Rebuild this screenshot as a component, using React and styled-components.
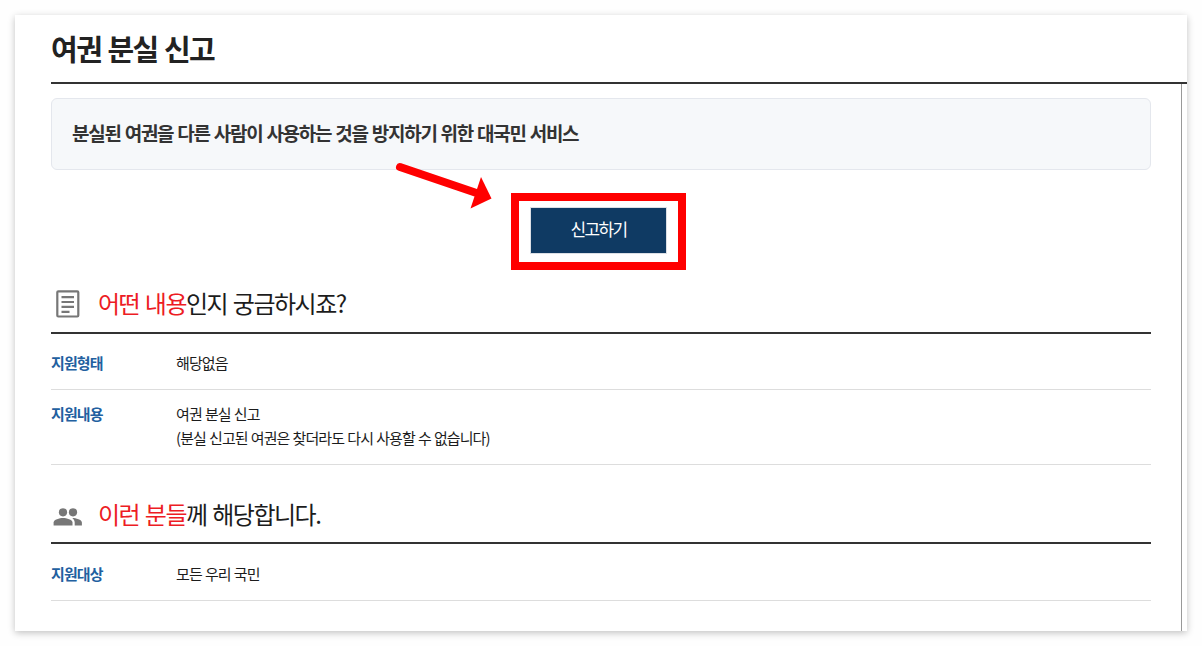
import styled, { createGlobalStyle } from "styled-components"

const rowsAbout = [
    { label: "지원형태", lines: ["해당없음"], height: 56, pad: 17 },
    { label: "지원내용", lines: ["여권 분실 신고", "(분실 신고된 여권은 찾더라도 다시 사용할 수 없습니다)"], height: 75, pad: 12 },
]

const rowsTarget = [
    { label: "지원대상", lines: ["모든 우리 국민"], height: 57, pad: 18 },
]

const DocumentIcon = () => (
    <svg width="24" height="28" viewBox="0 0 24 28" fill="none" stroke="#777">
        <rect x="1.3" y="1.3" width="21" height="25.2" rx="1" strokeWidth="2.2" />
        <path d="M5.500 7.100h12.500M5.500 12h12.500M5.500 16.900h12.500M5.500 21.800h8" strokeWidth="2.2" />
    </svg>
)

const PeopleIcon = () => (
    <svg width="30" height="20" viewBox="0 0 30 20" fill="#777">
        <circle cx="10" cy="5.3" r="4.1" />
        <circle cx="20" cy="5.3" r="4.1" />
        <path d="M.6 18.6v-3C.6 12.500 6.500 11 10 11s9.500 1.500 9.500 4.600v3z" />
        <path d="M19.300 11c3.600 0 9.600 1.500 9.600 4.600v3h-7.200v-3c0-2-1-3.500-2.400-4.600z" />
    </svg>
)

const Section = ({ icon, accent, title, rows, top, iconTop, lineHeight }) => (
    <SectionBox $top={top}>
        <SectionHeader>
            <IconBox $top={iconTop}>{icon}</IconBox>
            <SectionTitle $line={lineHeight}><Accent>{accent}</Accent>{title}</SectionTitle>
        </SectionHeader>
        {rows.map((row) => (
            <Row key={row.label} $height={row.height} $pad={row.pad}>
                <Label>{row.label}</Label>
                <Value>{row.lines.map((line) => <p key={line}>{line}</p>)}</Value>
            </Row>
        ))}
    </SectionBox>
)

const App = () => {
    return (<Page>
        <GlobalStyle />
        <Card>
            <Header>여권 분실 신고</Header>
            <Content>
                <Summary>분실된 여권을 다른 사람이 사용하는 것을 방지하기 위한 대국민 서비스</Summary>
                <ButtonArea>
                    <Highlight>
                        <ReportButton>신고하기</ReportButton>
                    </Highlight>
                    <Arrow width="100" height="52" viewBox="0 0 100 52">
                        <path d="M6 7 81 32.500" stroke="#f00" strokeWidth="8" strokeLinecap="round" />
                        <path d="M87 17 97.500 38.500 76.500 48.500z" fill="#f00" />
                    </Arrow>
                </ButtonArea>
                <Section icon={<DocumentIcon />} accent="어떤 내용" title="인지 궁금하시죠?" rows={rowsAbout} top={0} iconTop={15} lineHeight={56} />
                <Section icon={<PeopleIcon />} accent="이런 분들" title="께 해당합니다." rows={rowsTarget} top={20} iconTop={22} lineHeight={58} />
            </Content>
        </Card>
    </Page>)
}

const GlobalStyle = createGlobalStyle`
* {
box-sizing: border-box;
}
body {
margin: 0;
background: #fefefe;
font-family: "Noto Sans CJK KR", sans-serif;
color: #1c1c1c;
}
p, h1, h2 {
margin: 0;
}
`;

const Page = styled.div`
height: 646px;
padding: 15px;
overflow: hidden;
`;

const Card = styled.main`
width: 1172px;
height: 616px;
padding-left: 36px;
background: #fff;
box-shadow: 0 2px 7px rgba(0, 0, 0, 0.24);
`;

const Header = styled.h1`
height: 69px;
border-bottom: 2px solid #333;
font-size: 29px;
font-weight: 700;
line-height: 66px;
letter-spacing: -1.5px;
word-spacing: 1px;
color: #222;
`;

const Content = styled.div`
width: 1131px;
height: 547px;
padding: 14px 30px 0 0;
border-right: 1px solid #999;
`;

const Summary = styled.p`
height: 72px;
padding-left: 20px;
border: 1px solid #e4e7ed;
border-radius: 6px;
background: #f6f8fa;
font-size: 19px;
font-weight: 700;
line-height: 68px;
letter-spacing: -1.25px;
word-spacing: 0.9px;
color: #333;
`;

const ButtonArea = styled.div`
position: relative;
display: flex;
height: 105px;
padding: 23px 0 0 460px;
`;

const Highlight = styled.div`
width: 175px;
height: 77px;
padding: 6px 0 0 11px;
border: 8px solid #f00;
`;

const ReportButton = styled.button`
width: 137px;
height: 47px;
padding: 0 0 3px;
border: 1px solid #dbdfe5;
background: #0f3a63;
color: #fff;
font-family: inherit;
font-size: 17px;
font-weight: 400;
letter-spacing: -1.6px;
line-height: 42px;
`;

// pointer drawn over the summary box towards the button
const Arrow = styled.svg`
position: absolute;
left: 343px;
top: -10px;
fill: none;
`;

const SectionBox = styled.section`
padding-top: ${(props) => props.$top}px;
`;

const SectionHeader = styled.div`
display: flex;
height: 59px;
border-bottom: 2px solid #333;
`;

const IconBox = styled.div`
display: flex;
align-items: flex-start;
justify-content: center;
width: 33px;
padding-top: ${(props) => props.$top}px;
`;

const SectionTitle = styled.h2`
padding-left: 14px;
font-size: 24px;
font-weight: 400;
line-height: ${(props) => props.$line}px;
letter-spacing: -1.5px;
word-spacing: 1.8px;
`;

const Accent = styled.span`
color: #ed1c24;
`;

const Row = styled.div`
display: flex;
height: ${(props) => props.$height}px;
padding-top: ${(props) => props.$pad}px;
border-bottom: 1px solid #ddd;
font-size: 15px;
line-height: 23.500px;
letter-spacing: -0.92px;
word-spacing: 0.7px;
`;

const Label = styled.div`
width: 125px;
font-weight: 700;
color: #22609f;
`;

const Value = styled.div`
flex: 1;
`;

export default App
